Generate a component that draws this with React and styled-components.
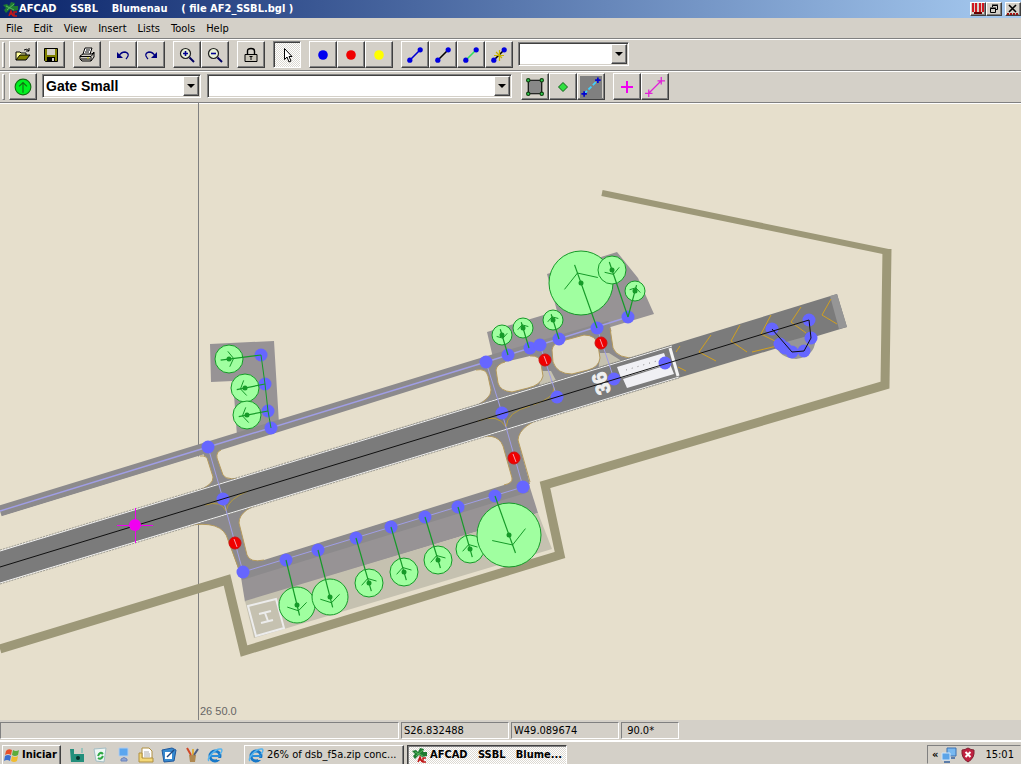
import React from 'react';
import styled, { createGlobalStyle, css } from 'styled-components'

const GlobalStyle = createGlobalStyle`
  *{
    box-sizing:border-box;
  }
  body{
    margin:0;
    overflow:hidden;
    background:#d4d0c8;
    color:#000;
    font-family:'DejaVu Sans Condensed', 'DejaVu Sans', sans-serif;
    font-size:11px;
    line-height:14px;
  }
  button, select, input{
    font:inherit;
    color:inherit;
    border-radius:0;
  }
  svg{
    flex-shrink:0;
  }
`

const Colors = {
  face: '#d4d0c8',
  shadow: '#808080',
  dark: '#404040',
  land: '#e6dfcc',
  taxi: '#8c8a8c',
  runway: '#7b7b7b',
  edge: '#b59a5c',
  node: '#6666ff',
  route: '#a09ee6',
  green: '#159a28',
}

const raised = css`
  border:1px solid;
  border-color:#fff ${Colors.dark} ${Colors.dark} #fff;
  box-shadow:inset -1px -1px ${Colors.shadow};
`

const dither = css`
  background:repeating-conic-gradient(#fff 0 25%, #dcd9d2 0 50%) 0 0 / 2px 2px;
`

const Window = styled.div`
  display:flex;
  flex-direction:column;
  height:100vh;
  overflow:hidden;
`

const TitleBar = styled.header`
  display:flex;
  align-items:center;
  height:18px;
  padding:0 0 0 2px;
  background:linear-gradient(to right, #0a246a, #a6caf0);
  color:#fff;
`

const Title = styled.h1`
  flex:1;
  margin:0;
  padding-left:1px;
  font-size:11px;
  line-height:14px;
  white-space:pre;
`

const CaptionButton = styled.button`
  display:flex;
  align-items:center;
  justify-content:center;
  width:16px;
  height:14px;
  padding:0;
  margin-left:${props => props.$apart ? 3 : 0}px;
  background:${Colors.face};
  ${raised}
`

const MenuBar = styled.nav`
  display:flex;
  align-items:center;
  height:20px;
  padding:1px 0 0 6px;
  gap:11px;
`

const MenuItem = styled.button`
  padding:0;
  border:0;
  background:none;
`

const Toolbar = styled.div`
  display:flex;
  align-items:center;
  height:32px;
  padding-left:2px;
  border-top:1px solid ${Colors.shadow};
  box-shadow:inset 0 1px #fff;
`

const Grip = styled.span`
  width:3px;
  height:26px;
  margin-right:4px;
  border:1px solid;
  border-color:#fff ${Colors.shadow} ${Colors.shadow} #fff;
`

const Group = styled.div`
  display:flex;
  margin-right:${props => props.$gap ?? 8}px;
`

const ToolButton = styled.button`
  display:flex;
  align-items:center;
  justify-content:center;
  width:28px;
  height:27px;
  padding:0;
  background:${Colors.face};
  ${raised}
  ${props => props.$pressed && css`
    ${dither}
    border-color:${Colors.shadow} #fff #fff ${Colors.shadow};
    box-shadow:inset 1px 1px ${Colors.dark};
  `}
`

const Combo = styled.label`
  display:flex;
  position:relative;
  width:${props => props.$width}px;
  height:24px;
  margin:0 ${props => props.$gap ?? 6}px 2px 0;
  border:1px solid;
  border-color:${Colors.shadow} #fff #fff ${Colors.shadow};
  box-shadow:inset 1px 1px ${Colors.dark}, inset -1px -1px ${Colors.face};
  background:#fff;
`

const Select = styled.select`
  flex:1;
  min-width:0;
  padding:0 18px 0 3px;
  border:0;
  outline:0;
  appearance:none;
  background:none;
  font-family:'Liberation Sans', Arial, sans-serif;
  font-size:14px;
  font-weight:bold;
`

const DropArrow = styled.span`
  position:absolute;
  top:1px;
  right:1px;
  bottom:1px;
  width:16px;
  display:flex;
  align-items:center;
  justify-content:center;
  pointer-events:none;
  background:${Colors.face};
  ${raised}
  &::after{
    content:'';
    border:4px solid transparent;
    border-top-color:#000;
    border-bottom:0;
  }
`

const Chart = styled.main`
  flex:1;
  min-height:0;
  border-top:1px solid ${Colors.shadow};
  background:${Colors.land};
  box-shadow:inset 0 1px #fff;
`

const ChartSvg = styled.svg`
  display:block;
  width:100%;
  height:100%;
`

const GridLabel = styled.text`
  font-family:'Liberation Sans', Arial, sans-serif;
  font-size:11px;
  fill:#666;
`

const RunwayNumber = styled.text`
  font-family:'Liberation Sans', Arial, sans-serif;
  font-size:20px;
  font-weight:bold;
  fill:#f0f0f0;
  stroke:#f0f0f0;
`

const StatusBar = styled.footer`
  display:grid;
  grid-template-columns:minmax(0, 399px) 108px 108px 58px;
  gap:2px;
  height:21px;
  padding:2px 0 1px;
  border-bottom:1px solid #fff;
`

const StatusPanel = styled.div`
  padding:1px 2px 0;
  border:1px solid;
  border-color:${Colors.shadow} #fff #fff ${Colors.shadow};
  white-space:pre;
`

const TaskBar = styled.footer`
  display:flex;
  height:23px;
  padding:3px 0 0 2px;
  border-top:1px solid #fff;
`

const StartButton = styled.button`
  display:flex;
  align-items:center;
  gap:2px;
  width:59px;
  padding:0 2px 0 1px;
  font-weight:bold;
  background:${Colors.face};
  ${raised}
  border-bottom:0;
  box-shadow:inset -1px 0 ${Colors.shadow};
`

const QuickLaunch = styled.div`
  display:flex;
  align-items:center;
  gap:7px;
  width:183px;
  padding-left:8px;
`

const QuickButton = styled.button`
  display:flex;
  width:16px;
  padding:0;
  border:0;
  background:none;
`

const TaskButton = styled.button`
  display:flex;
  align-items:center;
  gap:3px;
  width:160px;
  margin-right:3px;
  padding:0 3px;
  overflow:hidden;
  white-space:pre;
  background:${Colors.face};
  ${raised}
  border-bottom:0;
  box-shadow:inset -1px 0 ${Colors.shadow};
  ${props => props.$active && css`
    ${dither}
    font-weight:bold;
    border-color:${Colors.dark} #fff #fff ${Colors.dark};
    box-shadow:inset 1px 1px ${Colors.shadow};
  `}
`

const Tray = styled.div`
  display:flex;
  align-items:center;
  gap:3px;
  width:94px;
  margin-left:auto;
  padding-left:4px;
  border:1px solid;
  border-color:${Colors.shadow} transparent transparent ${Colors.shadow};
`

const TrayMore = styled.button`
  padding:0;
  border:0;
  background:none;
  font-weight:bold;
  line-height:14px;
`

const Clock = styled.time`
  margin-left:6px;
`

const Icon = ({size = 16, children}) => (
  <svg width={size} height={size} viewBox='0 0 16 16' fill='none' aria-hidden='true'>{children}</svg>
)

const AfcadIcon = () => (
  <Icon>
    <path d='M1 4 L5 3 L7 5 L9 1 L13 2 L12 5 L16 5 V9 L11 10 L8 8 L4 12 L2 9 L4 7 Z' fill='#1f7a32'/>
    <path d='M4 5 L12 9 M12 3 L5 9' stroke='#55b85b'/>
    <path d='M7 15 L9 10 L11 15 M8 13 H10 M15 11 H12 V15 H15' stroke='#c01818' strokeWidth='1.5'/>
  </Icon>
)

const IeIcon = () => (
  <Icon>
    <circle cx='8' cy='9' r='5' stroke='#1878c8' strokeWidth='3'/>
    <path d='M4 9 H13' stroke='#2a8edb' strokeWidth='2'/>
    <path d='M10 12 H15' stroke='#d4d0c8' strokeWidth='2'/>
    <path d='M2 14 C-1 12 8 1 14 2 C16 3 14 6 13 7' stroke='#56b4ee' strokeWidth='1.5'/>
  </Icon>
)

const OpenIcon = () => (
  <Icon>
    <path d='M1 13 V5 H5 L6 6 H11 V8' fill='#ffff9c' stroke='#000'/>
    <path d='M1 13 L5 8 H15 L11 13 Z' fill='#808000' stroke='#000'/>
    <path d='M9 3 Q12 1 14 4 M14 1 V4 H11' stroke='#000'/>
  </Icon>
)

const SaveIcon = () => (
  <Icon>
    <path d='M1.5 1.5 H14.5 V14.5 H2.5 L1.5 13.5 Z' fill='#808000' stroke='#000'/>
    <path d='M4 2 H12 V8 H4 Z' fill='#d4d0c8'/>
    <path d='M4 10 H12 V14 H4 Z' fill='#000'/>
    <path d='M9 11 H11 V14 H9 Z' fill='#d4d0c8'/>
  </Icon>
)

const PrintIcon = () => (
  <Icon>
    <path d='M4 7 L6 1 H13 L11 7' fill='#fff' stroke='#000'/>
    <path d='M7 3 H11 M6 5 H10' stroke='#000'/>
    <path d='M1 9 L4 7 H13 L15 5 V10 L12 14 H3 L1 12 Z' fill='#d4d0c8' stroke='#000'/>
    <path d='M1 9.500 H12 L15 6 M12 10 V14 M2 12 H11' stroke='#000'/>
    <path d='M8 11 H10' stroke='#cccc00'/>
  </Icon>
)

const UndoIcon = ({flip}) => (
  <Icon>
    <g transform={flip ? 'translate(16 0) scale(-1 1)' : undefined}>
      <path d='M2 5 V11 H8 Z' fill='#000080'/>
      <path d='M4 9 Q6 5 10 5 Q14 6 13 9 Q12 11 11 12' stroke='#000080' strokeWidth='1.300'/>
    </g>
  </Icon>
)

const ZoomIcon = ({plus}) => (
  <Icon>
    <circle cx='6.500' cy='6.500' r='5' fill='#e8f0d8' stroke='#202020' strokeWidth='1.200'/>
    <path d={plus ? 'M4 6.500 H9 M6.500 4 V9' : 'M4 6.500 H9'} stroke='#000090' strokeWidth='1.600'/>
    <path d='M10.500 10.500 L15 15' stroke='#000060' strokeWidth='2'/>
  </Icon>
)

const LockIcon = () => (
  <Icon>
    <path d='M4.500 7 V4 Q4.500 1.500 8 1.500 Q11.500 1.500 11.500 4 V7' stroke='#000' strokeWidth='1.400'/>
    <path d='M2 7.500 H14 V14.500 H2 Z' fill='#c8c4b8' stroke='#000'/>
    <path d='M6.500 9.500 H9.500 M8 9.500 V13' stroke='#000'/>
  </Icon>
)

const PointerIcon = () => (
  <Icon>
    <path d='M5.500 1.500 V12.500 L8 10 L10 15 L12 14 L10 9.500 H13 Z' fill='#fff' stroke='#000'/>
  </Icon>
)

const DotIcon = ({color}) => <Icon><circle cx='8' cy='8' r='4.800' fill={color}/></Icon>

const LinkIcon = ({color, star}) => (
  <Icon>
    <path d='M3 13 L13 3' stroke={color} strokeWidth='1.600'/>
    <circle cx='2.800' cy='13.200' r='2.600' fill='#0000e0'/>
    <circle cx='13.200' cy='2.800' r='2.600' fill='#0000e0'/>
    {star && <path d='M8.500 3 V14 M3 8.500 H13 M5 5 L11 11' stroke='#c8b400' strokeWidth='1.200'/>}
  </Icon>
)

const GateIcon = () => (
  <Icon size={18}>
    <circle cx='8' cy='8' r='7' fill='#00f020' stroke='#107010'/>
    <path d='M8 13 V4 M4.500 7.500 L8 4 L11.500 7.500' stroke='#107010'/>
  </Icon>
)

const ApronIcon = () => (
  <Icon size={18}>
    <path d='M2 2 H14 V14 H2 Z' fill='#888' stroke='#000'/>
    {[[2, 2], [14, 2], [2, 14], [14, 14]].map(([x, y]) => (
      <circle key={`${x}-${y}`} cx={x} cy={y} r='1.500' fill='#30d050' stroke='#104010'/>
    ))}
  </Icon>
)

const DiamondIcon = () => (
  <Icon><path d='M8 3.500 L12.500 8 L8 12.500 L3.500 8 Z' fill='#30e040' stroke='#106018'/></Icon>
)

const EdgeLineIcon = () => (
  <Icon size={22}>
    <path d='M0 0 H16 V16 H0 Z' fill='#808080'/>
    <path d='M3 13 L13 3' stroke='#40d0ff' strokeDasharray='3 1.500' strokeWidth='1.300'/>
    <path d='M1 13 H5 M3 11 V15 M11 3 H15 M13 1 V5' stroke='#0000d0' strokeWidth='1.200'/>
  </Icon>
)

const PlusIcon = () => (
  <Icon><path d='M8 2 V14 M2 8 H14' stroke='#f000f0' strokeWidth='2'/></Icon>
)

const PlusLineIcon = () => (
  <Icon size={20}>
    <path d='M3 13 L13 3 M0 13 H6 M3 10 V16 M10 3 H16 M13 0 V6' stroke='#e020d8'/>
  </Icon>
)

const FlagIcon = () => (
  <Icon>
    <path d='M2 4 Q4 1 8 3 L7 8 Q4 6 1 8 Z' fill='#e8502a'/>
    <path d='M9 3 Q12 5 15 3 L14 8 Q11 10 8 8 Z' fill='#5cac3c'/>
    <path d='M1 9 Q4 7 7 9 L6 14 Q3 12 0 14 Z' fill='#3c6fd0'/>
    <path d='M8 9 Q11 11 14 9 L13 14 Q10 16 7 14 Z' fill='#f0bc30'/>
  </Icon>
)

const quickLaunch = [
  {name: 'Media', art: <><path d='M1 2 H5 V7 H15 V15 H2 Z' fill='#238f7c'/><circle cx='9' cy='11' r='2' fill='#07332e'/><path d='M13 1 V6' stroke='#5cb8b0'/></>},
  {name: 'Recycle', art: <><path d='M2 2 L14 1 L12 15 L4 14 Z' fill='#edf6f4' stroke='#a3bdc4'/><path d='M6 9 Q8 4 11 7 M11 9 Q9 13 6 11' stroke='#30a844' strokeWidth='2'/></>},
  {name: 'Network', art: <><path d='M4 1 H13 V9 H4 Z' fill='#5ba6ef' stroke='#b4cdec'/><path d='M6 12 Q9 9 12 12 V14 H6 Z' fill='#8ca4d4' stroke='#6c84bc'/></>},
  {name: 'Documents', art: <><path d='M4 1 H11 L14 4 V13 H4 Z' fill='#fff' stroke='#b09040'/><path d='M1 6 H4 V11 H15 V15 H1 Z' fill='#f4d878' stroke='#b09040'/><path d='M6 5 H11 M6 7 H12 M6 9 H12' stroke='#aaa'/></>},
  {name: 'Desktop', art: <><path d='M1 3 L11 1 L15 3 L13 14 L3 15 Z' fill='#378ad0' stroke='#20589c'/><path d='M4 5 H11 V12 H4 Z' fill='#fff'/><path d='M6 10 L13 3' stroke='#204880' strokeWidth='1.500'/></>},
  {name: 'Paint', art: <><path d='M5 8 H12 L11 15 H6 Z' fill='#b08850'/><path d='M7 8 L3 1' stroke='#d04828' strokeWidth='2'/><path d='M9 8 V2' stroke='#e0b040' strokeWidth='2'/><path d='M10 8 L14 2' stroke='#4c5c80' strokeWidth='2'/></>},
]

// Parking spots: x, y, radius, taxi link x/y, chevron pointing at the link (1) or away (-1)
const parkings = [
  [229, 359, 14, 261, 355, 1],
  [245, 388, 14, 265, 384, -1],
  [247, 415, 14, 268, 411, -1],
  [502, 335, 10, 508, 355, 1],
  [523, 328, 10, 529, 348, -1],
  [553, 320, 10, 559, 339, -1],
  [581, 283, 32, 597, 328, -1],
  [612, 270, 14, 628, 317, 1],
  [635, 291, 10, 628, 317, -1],
  [297, 605, 18, 286, 560, -1],
  [330, 597, 18, 318, 550, -1],
  [369, 583, 14, 356, 538, 1],
  [404, 572, 14, 391, 527, 1],
  [438, 560, 14, 425, 517, 1],
  [470, 549, 14, 458, 507, 1],
  [509, 535, 32, 495, 496, -1],
]

const nodes = [
  [208, 447], [223, 499], [243, 572], [261, 355], [265, 384], [268, 411], [271, 428],
  [486, 362], [508, 355], [530, 348], [540, 345], [559, 339], [597, 328], [628, 317],
  [502, 413], [557, 397], [614, 379], [665, 363], [523, 487],
  [286, 560], [318, 550], [356, 538], [391, 527], [425, 517], [458, 507], [495, 496],
  [772, 329], [780, 344], [785, 348], [792, 352], [804, 351], [811, 338], [809, 320],
]

const stops = [[235, 543], [514, 458], [545, 360], [601, 343]]

const chevrons = [
  'M711 335 L699 352 L716 361', 'M740 325 L731 341 L747 352', 'M771 315 L761 334 L777 342',
  'M801 307 L791 322 L806 333', 'M831 299 L822 315 L837 324', 'M680 346 L676 352', 'M678 367 L686 371', 'M752 352 L777 346',
]

const Parking = ({x, y, r, tx, ty, way}) => {
  const len = Math.hypot(tx - x, ty - y)
  const ux = (tx - x) / len
  const uy = (ty - y) / len
  const ax = x + ux * way * r * 0.33
  const ay = y + uy * way * r * 0.33
  // 58 degrees either side of the nose
  const arm = sign => {
    const c = 0.53
    const s = 0.85 * sign
    const bx = -ux * way
    const by = -uy * way
    return `${ax + (bx * c - by * s) * r * 0.65} ${ay + (bx * s + by * c) * r * 0.65}`
  }
  return (
    <g stroke={Colors.green}>
      <circle cx={x} cy={y} r={r} fill='#a0ffa0'/>
      <path d={`M${tx} ${ty} L${x - ux * r * 0.6} ${y - uy * r * 0.6}`} strokeWidth='1.200'/>
      <path d={`M${arm(1)} L${ax} ${ay} L${arm(-1)}`} fill='none'/>
      <circle cx={x} cy={y} r='2.500' fill={Colors.green} stroke='none'/>
    </g>
  )
}

const AirportChart = () => (
  <ChartSvg viewBox='0 103 1021 617' preserveAspectRatio='xMidYMid slice' role='img' aria-label='Blumenau airport layout'>
    <path d='M198.500 103 V720' stroke='#808080'/>

    {/* boundary fence */}
    <g fill='none' stroke='#9d9878' strokeLinejoin='miter'>
      <path d='M602 193 L888 252' strokeWidth='6'/>
      <path d='M887 249 L885 385 L545 485 L560 555 L244 651 L227 580 L0 649' strokeWidth='9'/>
    </g>

    {/* aprons */}
    <g fill='#979395'>
      <path d='M210 344 L274 341 L279 424 L237 436 L233 381 L211 382 Z'/>
      <path d='M487 332 L557 311 L547 274 L617 252 L638 278 L654 314 L494 362 Z'/>
      <path d='M239 565 L527 478 L538 513 L245 602 Z'/>
    </g>
    <path d='M245 601 L538 513 L552 549 L254 638 Z' fill='#c5c1b0'/>

    {/* taxiways */}
    <g fill={Colors.taxi}>
      <path d='M240 563 L525 478 L529 492 L242 580 Z'/>
      <path d='M175 498 L212 476 L202 450 L486 364 L610 328 L613 348 Q617 359 638 358 L560 395 L200 505 Z'/>
      <path d='M185 526 Q223 519 228 540 L240 574 L270 563 L275 495 L200 500 Z'/>
      <path d='M460 443 L500 450 L510 490 L530 484 L518 440 Q519 424 552 415 L545 405 Z'/>
    </g>
    <path d='M0 511 L486 362 L610 326' fill='none' stroke={Colors.taxi} strokeWidth='11'/>
    <path d='M542 371 L551 371 L560 388 L538 392 Z M600 353 L609 353 L628 365 L598 374 Z' fill='#c5c1b0'/>

    {/* grass between the taxiways */}
    <g fill={Colors.land}>
      <path d='M0 517 L200 456 Q207 455 208 461 L213 477 Q214 485 195 492 L0 551 Z'/>
      <path d='M221 450 L476 370 Q486 368 488 376 L491 390 Q491 399 470 408 L245 477 Q227 482 223 475 L217 458 Q216 452 221 450 Z'/>
      <path d='M505 362 L530 356 Q540 355 541 364 L543 376 Q541 385 528 388 L512 392 Q500 391 498 383 L496 370 Q497 364 505 362 Z'/>
      <path d='M562 341 L584 335 Q596 335 598 345 L600 358 Q599 367 588 370 L572 374 Q557 374 553 362 L552 350 Q553 343 562 341 Z'/>
      <path d='M270 501 L470 440 Q497 430 503 446 L512 478 Q513 483 504 485 L264 560 Q250 563 247 555 L239 523 Q239 508 270 501 Z'/>
    </g>
    <g fill='none' stroke={Colors.edge}>
      <path d='M200 456 Q207 455 208 461 L213 477 Q214 485 195 492 L175 498'/>
      <path d='M470 408 L476 406 Q491 399 491 390 L488 376 Q486 368 476 370 M250 476 Q227 482 223 475 L217 458 Q216 452 221 450'/>
      <path d='M530 356 Q540 355 541 364 L543 376 Q541 385 528 388 L512 392 Q500 391 498 383 L496 370 Q497 364 505 362'/>
      <path d='M562 341 L584 335 Q596 335 598 345 L600 358 Q599 367 588 370 L572 374 Q557 374 553 362 L552 350 Q553 343 562 341 Z'/>
      <path d='M610 328 L613 348 Q617 359 638 358'/>
      <path d='M470 440 Q497 430 503 446 L512 478 Q513 483 504 485 M264 560 Q250 563 247 555 L239 523 Q239 508 270 501'/>
      <path d='M185 526 Q223 519 228 540 L240 572 M530 482 L518 440 Q519 424 552 415'/>
    </g>

    {/* runway */}
    <path d='M0 551 L837 294 L847 327 L0 583 Z' fill={Colors.runway}/>
    <path d='M830 296 L837 294 L847 327 L839 329 Z' fill='#969696'/>
    <path d='M775 345 L815 334 Q818 356 796 359 Q780 358 775 345 Z' fill='#969696'/>
    <path d='M0 551 L672 346 M0 583 L679 377' stroke='#f4f4f4'/>
    <path d='M0 550 L672 345 M0 584 L679 378' stroke='#8a8a84' strokeWidth='0.800' strokeDasharray='2 1'/>
    <path d='M670 348 L678 376' stroke='#f4f4f4' strokeWidth='3'/>
    <path d='M617 367 L664 353 L668 364 L621 378 Z M623 379 L670 364 L674 374 L627 388 Z' fill='#f0f0f4'/>
    <path d='M626 370 L660 360' stroke='#888' strokeDasharray='1 5'/>
    <g fill='none' stroke='#b59a3c'>
      {chevrons.map(d => <path key={d} d={d} stroke='#d0a020'/>)}
      <path d='M205 505 Q221 500 226 511 Q228 499 248 491 M478 421 Q498 413 506 427 Q507 412 530 406 M533 405 Q555 398 554 387'/>
    </g>
    <RunwayNumber transform='translate(611 392) rotate(-107)'>36</RunwayNumber>

    {/* helipad */}
    <g fill='none' stroke='#ececec' strokeWidth='2'>
      <path d='M248 606 L276 599 L284 628 L256 636 Z'/>
      <path d='M259 614 L271 611 M261 623 L273 620 M265 613 L268 621'/>
    </g>

    <g fill='none' stroke={Colors.route}>
      <path d='M0 511 L208 447 L486 362 L628 317' strokeWidth='1.400'/>
      <path d='M208 447 L223 499 L243 572 L523 487 L502 413 L486 362'/>
      <path d='M540 345 L557 397 M597 328 L614 379'/>
    </g>
    <g fill={Colors.node}>
      {nodes.map(([x, y]) => <circle key={`${x}-${y}`} cx={x} cy={y} r='6.500'/>)}
    </g>
    <g fill='#f00000'>
      {stops.map(([x, y]) => <circle key={`${x}-${y}`} cx={x} cy={y} r='6' stroke='#d01010'/>)}
    </g>
    <path d='M234 539 L237 547 M513 454 L516 462 M544 356 L547 364 M600 339 L603 347' stroke='#f4a0b0'/>
    <path d='M0 567 L809 320 L811 338 L804 351 L792 352 L772 329' fill='none' stroke='#101010'/>
    <path d='M261 355 L265 384 L268 411 L271 428' fill='none' stroke={Colors.green}/>
    {parkings.map(([x, y, r, tx, ty, way]) => (
      <Parking key={`${x}-${y}`} x={x} y={y} r={r} tx={tx} ty={ty} way={way}/>
    ))}

    {/* reference point */}
    <path d='M117 525.500 H153 M135.500 508 V543' stroke='#f000f0'/>
    <circle cx='135' cy='525' r='6' fill='#f000f0'/>
    <GridLabel x='200' y='715'>26 50.0</GridLabel>
  </ChartSvg>
)

const ComboBox = ({name, width, gap, options = ['']}) => (
  <Combo $width={width} $gap={gap}>
    <Select aria-label={name}>
      {options.map(option => <option key={option}>{option}</option>)}
    </Select>
    <DropArrow/>
  </Combo>
)

const Tool = ({name, pressed, children}) => (
  <ToolButton type='button' aria-label={name} aria-pressed={pressed} $pressed={pressed}>{children}</ToolButton>
)

const App = () => (
  <>
    <GlobalStyle/>
    <Window>
      <TitleBar>
        <AfcadIcon/>
        <Title>{'AFCAD    SSBL    Blumenau    ( file AF2_SSBL.bgl )'}</Title>
        <CaptionButton aria-label='Minimize'>
          <svg width='14' height='12' viewBox='0 0 14 12'><path d='M2 0 V9 M5 0 V9 M9 0 V9 M12 0 V9' stroke='#d01820' strokeWidth='2'/><path d='M3 10 H11' stroke='#600' strokeWidth='2'/></svg>
        </CaptionButton>
        <CaptionButton aria-label='Restore'>
          <svg width='10' height='10' viewBox='0 0 10 10' fill='none' stroke='#000'><path d='M3.500 3 V1.500 H8.500 V5.500 H7 M3 1 H9 M1.500 4.500 H6.500 V8.500 H1.500 Z M1 4 H7'/></svg>
        </CaptionButton>
        <CaptionButton aria-label='Close' $apart>
          <svg width='12' height='11' viewBox='0 0 12 11'><path d='M2 1 L9 8 M9 1 L2 8' stroke='#000' strokeWidth='1.600'/><path d='M0 10 H12' stroke='#a01010' strokeWidth='2' strokeDasharray='2 1'/></svg>
        </CaptionButton>
      </TitleBar>
      <MenuBar>
        {['File', 'Edit', 'View', 'Insert', 'Lists', 'Tools', 'Help'].map(item => <MenuItem key={item}>{item}</MenuItem>)}
      </MenuBar>
      <Toolbar>
        <Grip/>
        <Group>
          <Tool name='Open'><OpenIcon/></Tool>
          <Tool name='Save'><SaveIcon/></Tool>
        </Group>
        <Group><Tool name='Print'><PrintIcon/></Tool></Group>
        <Group>
          <Tool name='Undo'><UndoIcon/></Tool>
          <Tool name='Redo'><UndoIcon flip/></Tool>
        </Group>
        <Group>
          <Tool name='Zoom in'><ZoomIcon plus/></Tool>
          <Tool name='Zoom out'><ZoomIcon/></Tool>
        </Group>
        <Group><Tool name='Lock'><LockIcon/></Tool></Group>
        <Group><Tool name='Select' pressed><PointerIcon/></Tool></Group>
        <Group>
          <Tool name='Taxiway node'><DotIcon color='#0000f0'/></Tool>
          <Tool name='Hold short node'><DotIcon color='#f00000'/></Tool>
          <Tool name='ILS hold node'><DotIcon color='#ffff00'/></Tool>
        </Group>
        <Group $gap={5}>
          <Tool name='Taxiway link'><LinkIcon color='#0000d0'/></Tool>
          <Tool name='Runway link'><LinkIcon color='#000'/></Tool>
          <Tool name='Parking link'><LinkIcon color='#30e060'/></Tool>
          <Tool name='Split link'><LinkIcon color='#000' star/></Tool>
        </Group>
        <ComboBox name='Taxiway name' width={111}/>
      </Toolbar>
      <Toolbar>
        <Grip/>
        <Group $gap={5}><Tool name='Parking'><GateIcon/></Tool></Group>
        <ComboBox name='Parking type' width={159} options={['Gate Small', 'Gate Medium', 'Gate Heavy']}/>
        <ComboBox name='Parking name' width={305} gap={9}/>
        <Group>
          <Tool name='Apron'><ApronIcon/></Tool>
          <Tool name='Apron point'><DiamondIcon/></Tool>
          <Tool name='Edge lights'><EdgeLineIcon/></Tool>
        </Group>
        <Group>
          <Tool name='Fence point'><PlusIcon/></Tool>
          <Tool name='Fence line'><PlusLineIcon/></Tool>
        </Group>
      </Toolbar>
      <Chart><AirportChart/></Chart>
      <StatusBar>
        <StatusPanel/>
        <StatusPanel>S26.832488</StatusPanel>
        <StatusPanel>W49.089674</StatusPanel>
        <StatusPanel>{' 90.0*'}</StatusPanel>
      </StatusBar>
      <TaskBar>
        <StartButton><FlagIcon/>Iniciar</StartButton>
        <QuickLaunch>
          {quickLaunch.map(({name, art}) => (
            <QuickButton key={name} aria-label={name}><Icon>{art}</Icon></QuickButton>
          ))}
          <QuickButton aria-label='Internet'><IeIcon/></QuickButton>
        </QuickLaunch>
        <TaskButton><IeIcon/>26% of dsb_f5a.zip conc...</TaskButton>
        <TaskButton $active><AfcadIcon/>{'AFCAD   SSBL   Blume...'}</TaskButton>
        <Tray>
          <TrayMore aria-label='Show hidden icons'>«</TrayMore>
          <Icon>
            <path d='M6 1 H15 V9 H6 Z' fill='#78b8f0' stroke='#3c70b0'/>
            <path d='M1 6 H9 V13 H1 Z' fill='#5ca4e8' stroke='#d0e4f8'/>
            <path d='M3 15 H9 M10 11 H14' stroke='#5c7ca8' strokeWidth='2'/>
          </Icon>
          <Icon>
            <path d='M8 1 Q11 3 14 3 Q15 11 8 15 Q1 11 2 3 Q5 3 8 1 Z' fill='#c02040' stroke='#802030'/>
            <path d='M5.500 5 L10.500 10 M10.500 5 L5.500 10' stroke='#fff' strokeWidth='2'/>
          </Icon>
          <Clock>15:01</Clock>
        </Tray>
      </TaskBar>
    </Window>
  </>
)

export default App;
